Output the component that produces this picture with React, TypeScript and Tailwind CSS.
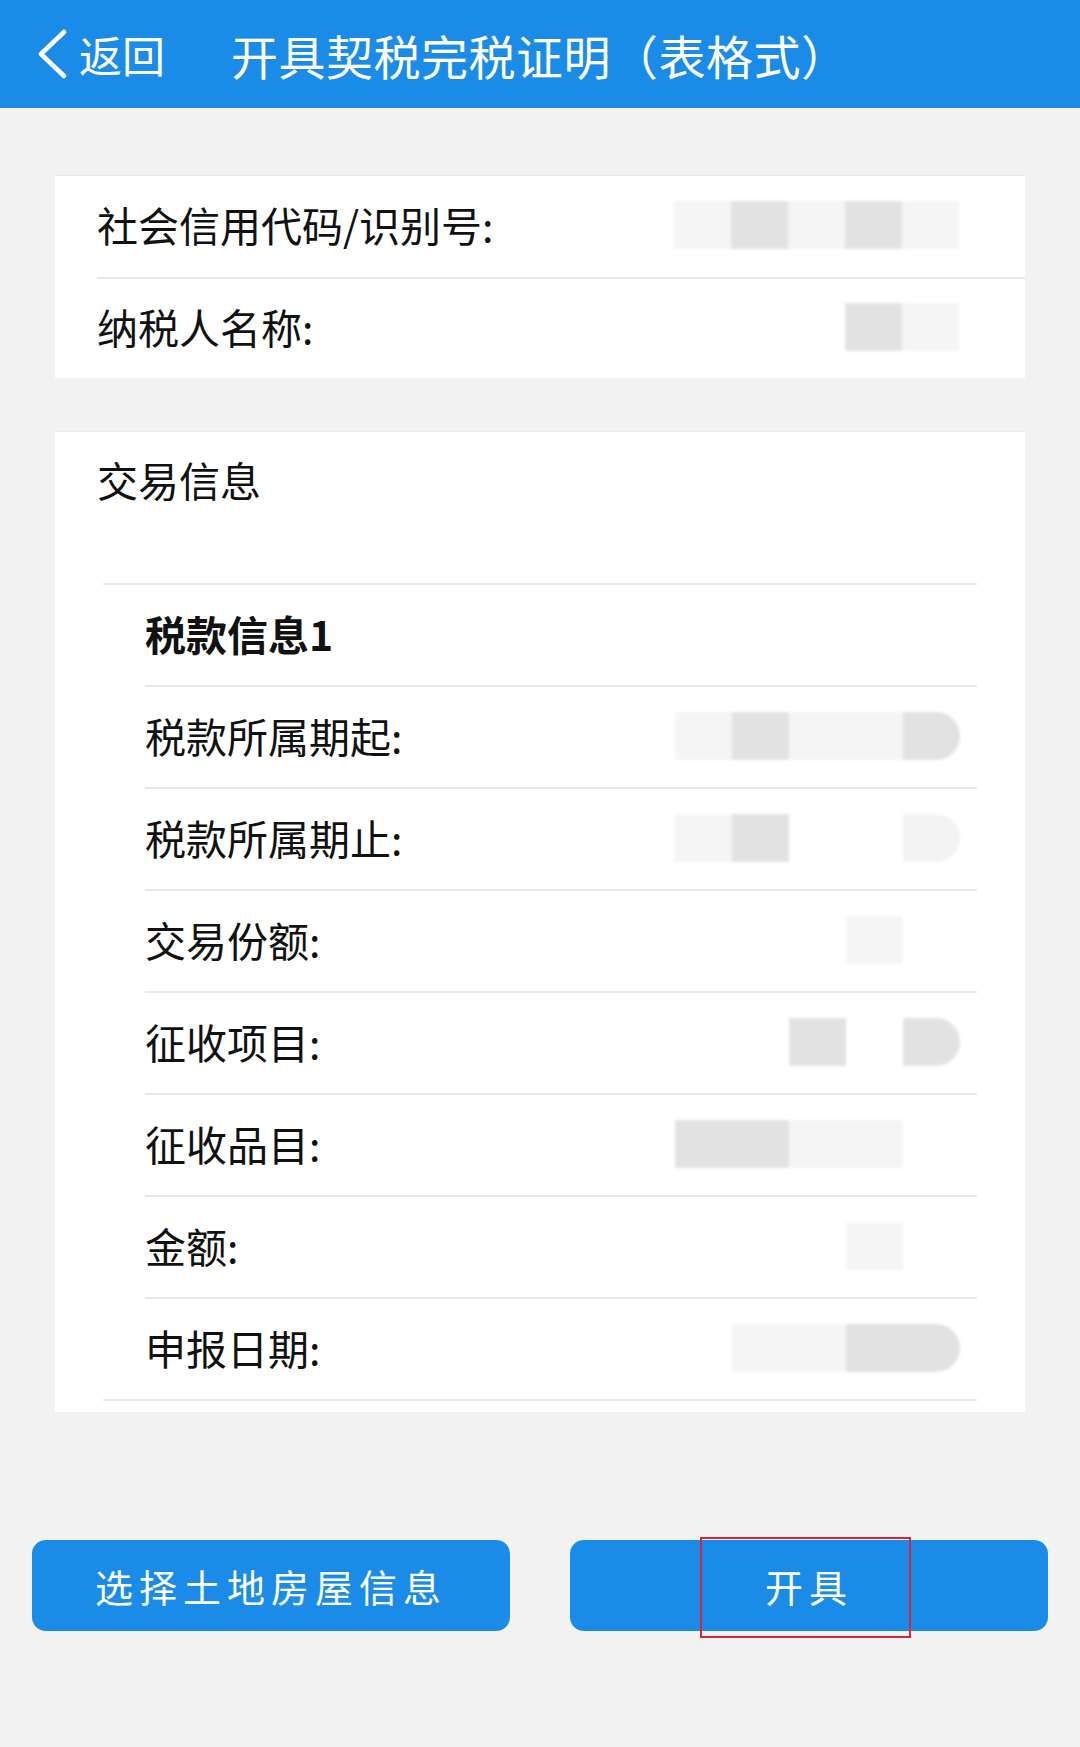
import React from "react";

type Cell = "e" | "d" | "f" | "r" | "fr";

const cellClass: Record<Cell, string> = {
  e: "bg-transparent",
  d: "bg-[#e2e2e2]",
  f: "bg-[#f5f5f5]",
  r: "bg-[#e2e2e2] rounded-r-full",
  fr: "bg-[#f3f3f3] rounded-r-full",
};

// redacted values, drawn as the mosaic blocks seen in the screenshot
function Masked({ cells }: { cells: Cell[] }) {
  return (
    <div className="flex blur-[1.5px]">
      {cells.map((c, i) => (
        <div key={i} className={`w-[57px] h-[48px] ${cellClass[c]}`} />
      ))}
    </div>
  );
}

const TAX_ROWS: { label: string; cells: Cell[] }[] = [
  { label: "税款所属期起:", cells: ["f", "d", "f", "f", "r"] },
  { label: "税款所属期止:", cells: ["f", "d", "e", "e", "fr"] },
  { label: "交易份额:", cells: ["e", "e", "e", "f", "e"] },
  { label: "征收项目:", cells: ["e", "e", "d", "e", "r"] },
  { label: "征收品目:", cells: ["d", "d", "f", "f", "e"] },
  { label: "金额:", cells: ["e", "e", "e", "f", "e"] },
  { label: "申报日期:", cells: ["e", "f", "f", "d", "r"] },
];

export default function App() {
  return (
    <div
      className="w-[1080px] h-[1747px] bg-[#f2f2f2] text-[#111] flex flex-col"
      style={{ fontFamily: '"Noto Sans CJK SC", "Noto Sans", sans-serif' }}
    >
      {/* Header */}
      <div className="h-[108px] bg-[#1a8ce8] flex items-center text-white shrink-0">
        <div className="flex items-center pl-[36px]">
          <svg width="32" height="50" viewBox="0 0 32 50" fill="none">
            <polyline
              points="28,3 5,25 28,47"
              stroke="white"
              strokeWidth="4.5"
              strokeLinecap="round"
              strokeLinejoin="round"
            />
          </svg>
          <span className="ml-[11px] text-[43px] leading-none">返回</span>
        </div>
        <h1 className="ml-[66px] text-[47px] leading-none font-normal tracking-[0.5px]">
          开具契税完税证明（表格式）
        </h1>
      </div>

      {/* Taxpayer card */}
      <div className="mt-[67px] mx-[55px] bg-white border-t border-[#e6e6e6]">
        <div className="ml-[42px] h-[101px] flex items-center justify-between pb-[3px]">
          <span className="text-[41px]">社会信用代码/识别号:</span>
          <div className="mr-[66px]">
            <Masked cells={["f", "d", "f", "d", "f"]} />
          </div>
        </div>
        <div className="ml-[42px] h-[101px] flex items-center justify-between border-t-2 border-[#e8e8e8] pb-[3px]">
          <span className="text-[41px]">纳税人名称:</span>
          <div className="mr-[66px]">
            <Masked cells={["e", "e", "e", "d", "f"]} />
          </div>
        </div>
      </div>

      {/* Transaction card */}
      <div className="mt-[53px] mx-[55px] bg-white border-t border-[#ececec] pb-[11px]">
        <div className="h-[151px] pl-[42px] pt-[23px]">
          <span className="text-[41px] leading-[48px]">交易信息</span>
        </div>
        <div className="mx-[48px] border-t-2 border-b-2 border-[#e8e8e8]">
          <div className="ml-[42px] h-[100px] flex items-center pb-[3px]">
            <span className="text-[41px] font-bold">税款信息1</span>
          </div>
          {TAX_ROWS.map((row) => (
            <div
              key={row.label}
              className="ml-[42px] h-[102px] flex items-center justify-between border-t-2 border-[#e8e8e8] pb-[3px]"
            >
              <span className="text-[41px]">{row.label}</span>
              <div className="mr-[17px]">
                <Masked cells={row.cells} />
              </div>
            </div>
          ))}
        </div>
      </div>

      {/* Actions */}
      <div className="mt-[128px] px-[32px] flex justify-between">
        <button className="w-[478px] h-[91px] rounded-[14px] bg-[#1a8ce8] text-white text-[38px] tracking-[6px]">
          选择土地房屋信息
        </button>
        <div className="relative">
          <button className="w-[478px] h-[91px] rounded-[14px] bg-[#1a8ce8] text-white text-[38px] tracking-[6px]">
            开具
          </button>
          <div className="absolute left-[130px] top-[-3px] w-[211px] h-[101px] border-2 border-[#d8253c] pointer-events-none" />
        </div>
      </div>
    </div>
  );
}
